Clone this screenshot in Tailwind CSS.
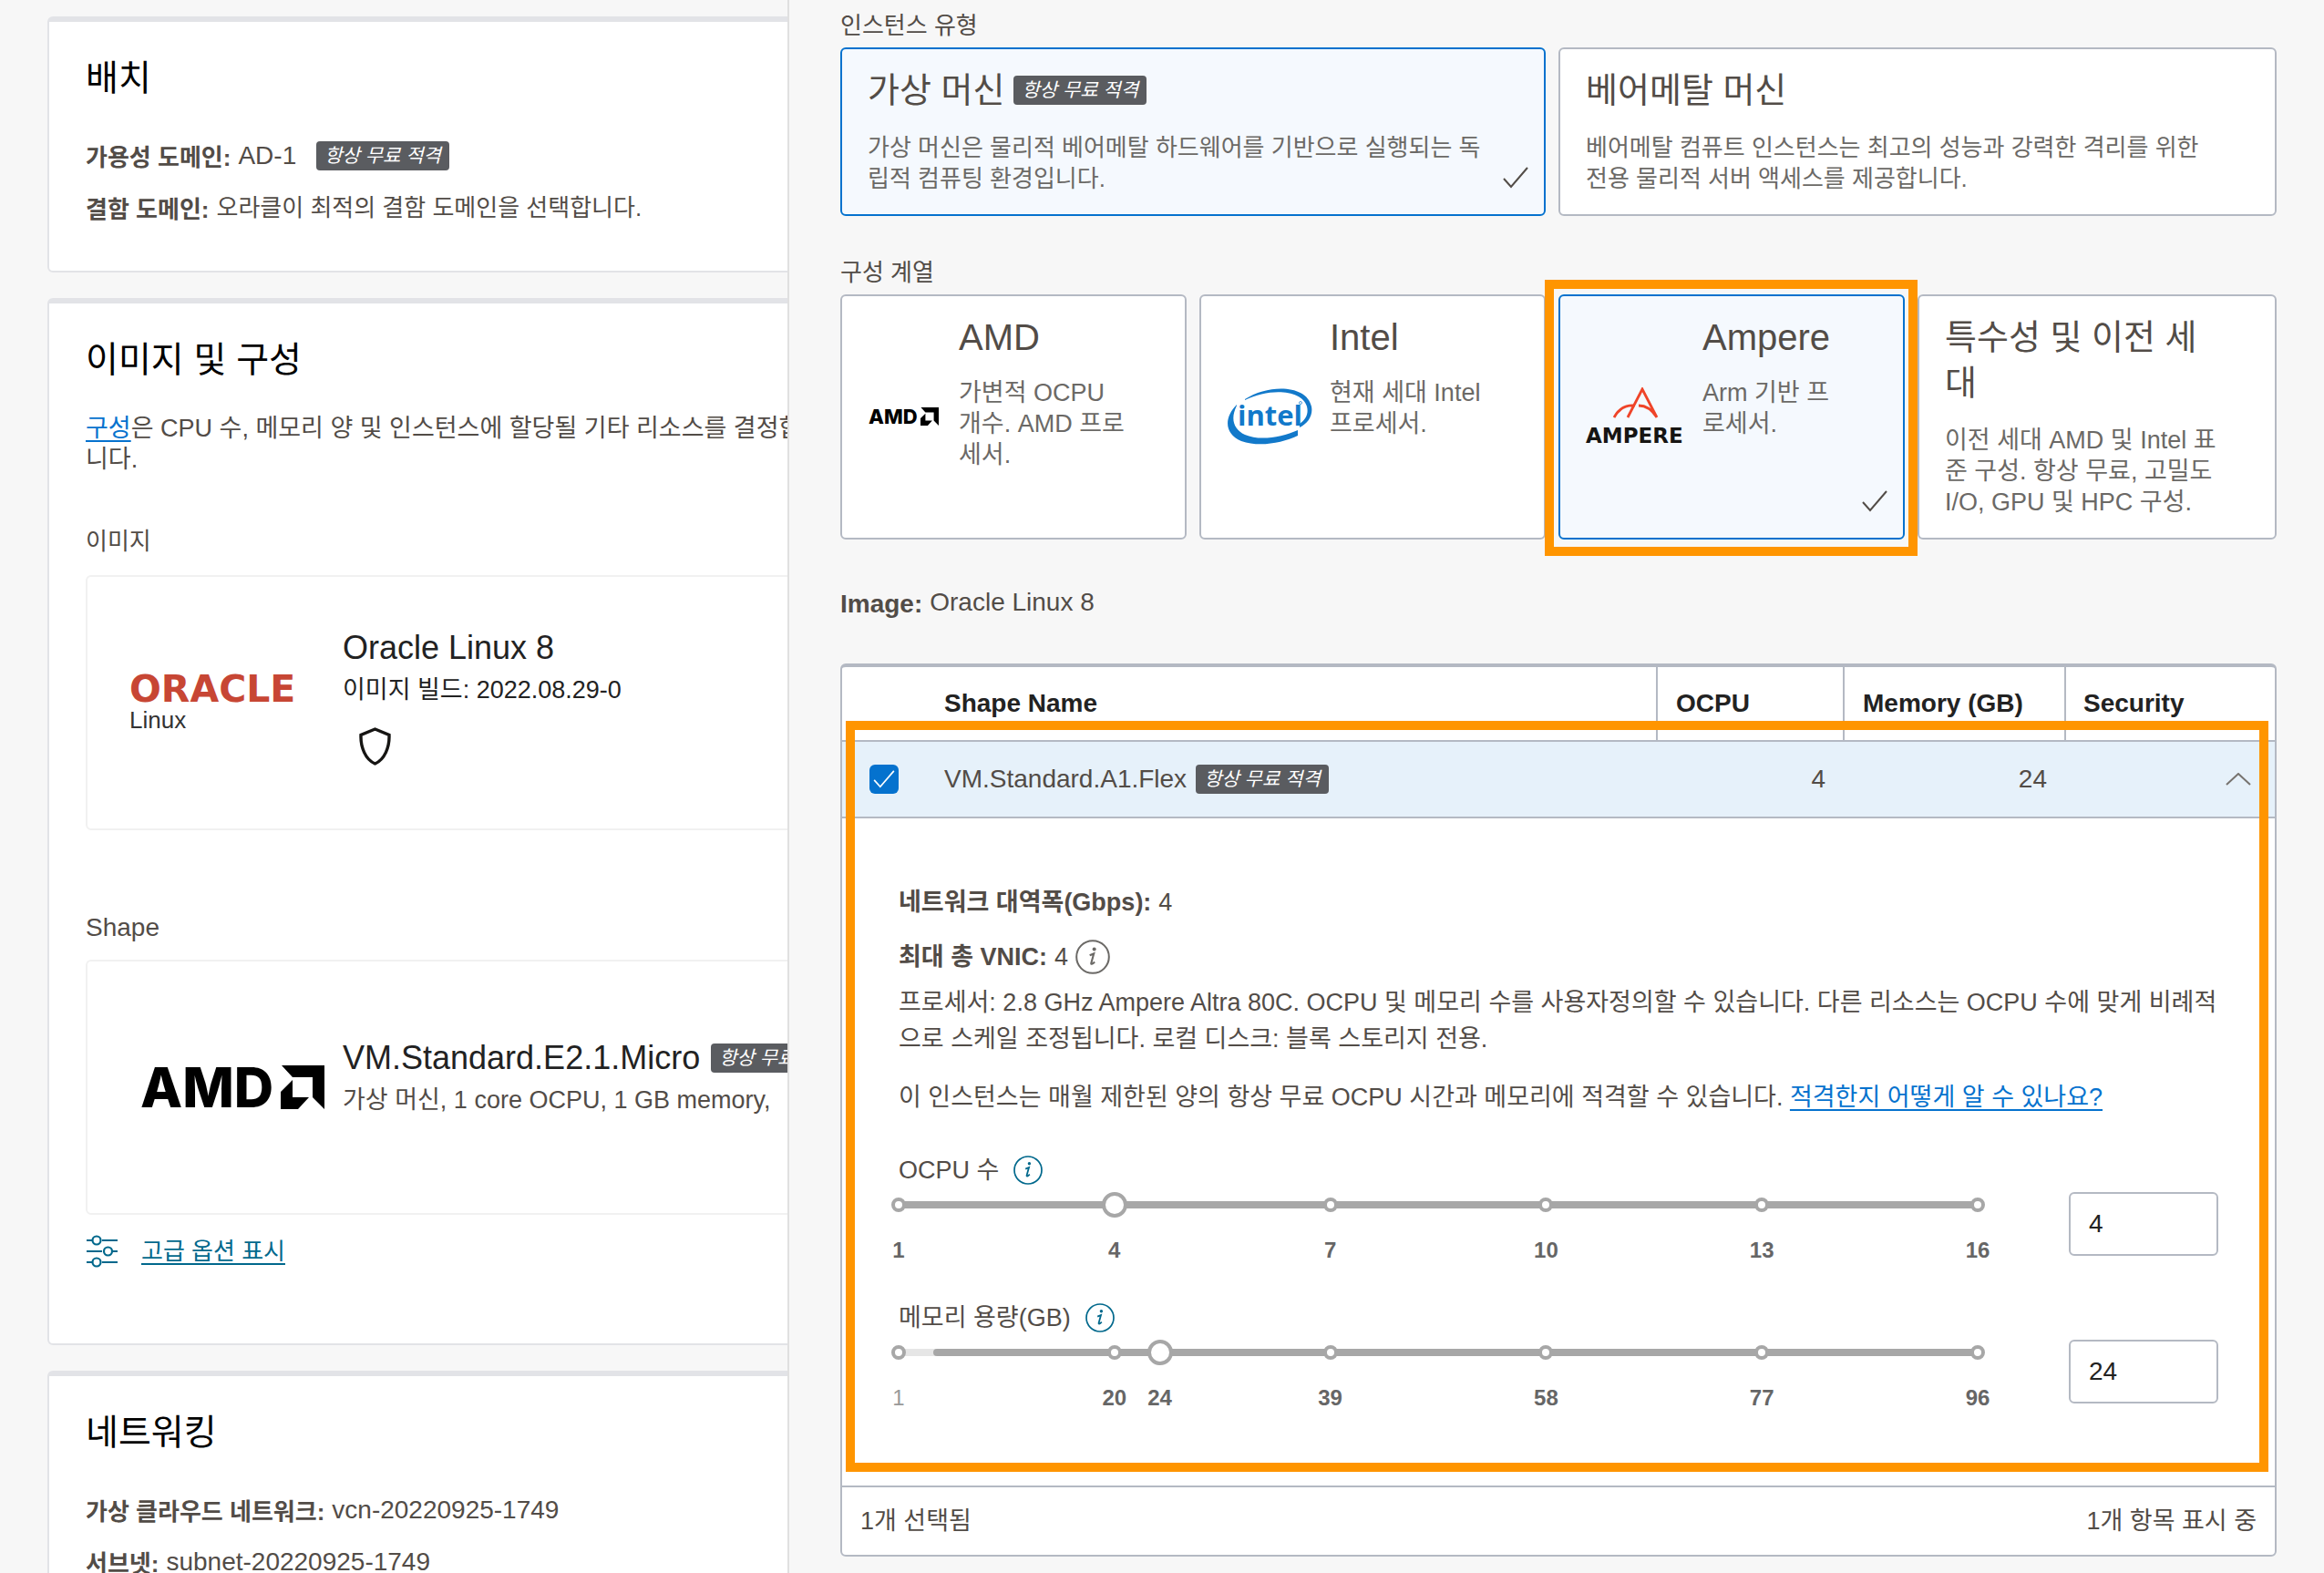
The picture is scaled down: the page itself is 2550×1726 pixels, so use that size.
<!DOCTYPE html>
<html lang="ko">
<head>
<meta charset="utf-8">
<meta name="viewport" content="width=device-width, initial-scale=1">
<title>컴퓨트 인스턴스 생성</title>
<script src="https://cdn.jsdelivr.net/npm/@tailwindcss/browser@4"></script>
</head>
<body class="bg-[#f7f7f7] font-['Liberation_Sans','Noto_Sans_CJK_KR',sans-serif] text-[26px] leading-[34px] text-[#524c47]">
<svg class="hidden" aria-hidden="true">
  <symbol id="amd-arrow" viewBox="0 0 48 48"><path d="M1 0H48V48L35 35V13H13Z"/><path d="M13 16V35H31L19 48H0V29Z"/></symbol>
  <symbol id="tick" viewBox="0 0 28 24"><path d="M1 13 9 22 27 1" fill="none" stroke="currentColor" stroke-width="2"/></symbol>
  <symbol id="info" viewBox="0 0 32 32"><circle cx="16" cy="16" r="15" fill="none" stroke="currentColor" stroke-width="1.7"/><circle cx="17.4" cy="8.8" r="1.7" fill="currentColor"/><path d="M13.2 14.6 17 13 14.6 21.6C14.3 23 15.4 23 17.8 20.6" fill="none" stroke="currentColor" stroke-width="1.8"/></symbol>
</svg>

<div class="flex h-screen overflow-hidden">
  <main class="w-[864px] shrink-0 overflow-hidden pl-[52px] pt-[18px]">
    <div class="flex w-[1200px] flex-col gap-[28px]">
      <section class="rounded-md border-2 border-t-[6px] border-[#e2e3e7] bg-white px-[40px] pb-[49px] pt-[32px]">
        <h2 class="text-[39px] leading-[60px] text-black">배치</h2>
        <dl class="mt-[38px] flex flex-col gap-[20px]">
          <div class="flex items-end gap-[8px]">
            <dt class="font-bold leading-[36px]">가용성 도메인:</dt>
            <dd class="flex items-center pb-[3px] text-[28px]">AD-1 <span class="ml-[22px] flex h-[32px] items-center rounded bg-[#5a5c60] px-[9px] text-[21px] italic text-white">항상 무료 적격</span></dd>
          </div>
          <div class="flex items-end gap-[8px]">
            <dt class="font-bold leading-[36px]">결함 도메인:</dt>
            <dd class="pb-[3px]">오라클이 최적의 결함 도메인을 선택합니다.</dd>
          </div>
        </dl>
      </section>

      <section class="rounded-md border-2 border-t-[6px] border-[#e2e3e7] bg-white px-[40px] pb-[81px] pt-[32px]">
        <h2 class="text-[39px] leading-[60px] text-black">이미지 및 구성</h2>
        <p class="mt-[28px] max-w-[786px] text-[27px]"><a href="#" class="text-[#0572ce] underline underline-offset-4">구성</a>은 CPU 수, 메모리 양 및 인스턴스에 할당될 기타 리소스를 결정합니다.</p>
        <h3 class="mt-[56px]">이미지</h3>
        <div class="mt-[20px] flex h-[280px] rounded-md border-2 border-[#f1f1f1]">
          <div class="w-[280px] shrink-0 self-center pl-[46px]">
            <div class="font-['DejaVu_Sans'] text-[41px] font-bold leading-[36px] text-[#c74634]">ORACLE</div>
            <div class="mt-[2px] leading-[28px] text-[#333]">Linux</div>
          </div>
          <div class="pt-[55px] text-[#222]">
            <div class="text-[36px] leading-[46px]">Oracle Linux 8</div>
            <div class="text-[27px] leading-[46px]">이미지 빌드: 2022.08.29-0</div>
            <svg class="ml-[18px] mt-[18px] h-[42px] w-[35px]" viewBox="0 0 35 42" fill="none" stroke="#161513" stroke-width="3.4"><path d="M17.500 2 33 8.500C33.500 22 28 35.500 17.500 40 7 35.500 1.500 22 2 8.500Z"/></svg>
          </div>
        </div>
        <h3 class="mt-[90px] text-[28px]">Shape</h3>
        <div class="mt-[18px] flex h-[280px] rounded-md border-2 border-[#f1f1f1]">
          <div class="flex w-[280px] shrink-0 items-center self-center pl-[58px] text-black">
            <span class="w-[154px] font-[Inter] text-[60px] font-extrabold leading-[48px]">AMD</span>
            <svg class="h-[48px] w-[48px]"><use href="#amd-arrow"/></svg>
          </div>
          <div class="pt-[83px]">
            <div class="flex items-center gap-[12px] text-[36px] leading-[46px] text-[#222]">VM.Standard.E2.1.Micro <span class="flex h-[32px] items-center rounded bg-[#5a5c60] px-[9px] text-[21px] italic text-white">항상 무료 적격</span></div>
            <div class="text-[27px] leading-[46px]">가상 머신, 1 core OCPU, 1 GB memory,</div>
          </div>
        </div>
        <div class="mt-[20px] flex h-[40px] items-center gap-[25px]">
          <svg class="h-[36px] w-[36px]" viewBox="0 0 36 36" fill="none" stroke="#00688c" stroke-width="2.200"><path d="M1 6H7M18 6H35M1 18H18M29 18H35M1 30H7M18 30H35"/><circle cx="12" cy="6" r="4.500"/><circle cx="24.500" cy="18" r="4.500"/><circle cx="12" cy="30" r="4.500"/></svg>
          <a href="#" class="text-[#00688c] underline underline-offset-4">고급 옵션 표시</a>
        </div>
      </section>

      <section class="rounded-md border-2 border-t-[6px] border-[#e2e3e7] bg-white px-[40px] pb-[49px] pt-[32px]">
        <h2 class="text-[39px] leading-[60px] text-black">네트워킹</h2>
        <dl class="mt-[38px] flex flex-col gap-[20px]">
          <div class="flex items-end gap-[8px]">
            <dt class="font-bold leading-[36px]">가상 클라우드 네트워크:</dt>
            <dd class="pb-[3px] text-[28px]">vcn-20220925-1749</dd>
          </div>
          <div class="flex items-end gap-[8px]">
            <dt class="font-bold leading-[36px]">서브넷:</dt>
            <dd class="pb-[3px] text-[28px]">subnet-20220925-1749</dd>
          </div>
        </dl>
      </section>
    </div>
  </main>

  <aside class="min-w-0 flex-1 border-l-2 border-[#e0e0e0] pl-[56px] pr-[52px] pt-[11px]">
    <h3>인스턴스 유형</h3>
    <div class="mt-[7px] grid grid-cols-2">
      <button type="button" class="relative mr-[14px] flex flex-col items-start rounded-md border-2 border-[#0572ce] bg-[#f5f9fe] pb-[22px] pl-[28px] pr-[60px] pt-[20px] text-left">
        <span class="flex items-center gap-[10px] text-[38px] leading-[50px]">가상 머신 <span class="flex h-[32px] items-center rounded bg-[#5a5c60] px-[9px] text-[21px] italic text-white">항상 무료 적격</span></span>
        <span class="mt-[21px] text-[#6b6966]">가상 머신은 물리적 베어메탈 하드웨어를 기반으로 실행되는 독립적 컴퓨팅 환경입니다.</span>
        <svg class="absolute bottom-[28px] right-[17px] h-[24px] w-[28px]"><use href="#tick"/></svg>
      </button>
      <button type="button" class="flex flex-col items-start rounded-md border-2 border-[#b4b9c3] bg-white pb-[22px] pl-[28px] pr-[60px] pt-[20px] text-left">
        <span class="text-[38px] leading-[50px]">베어메탈 머신</span>
        <span class="mt-[21px] text-[#6b6966]">베어메탈 컴퓨트 인스턴스는 최고의 성능과 강력한 격리를 위한 전용 물리적 서버 액세스를 제공합니다.</span>
      </button>
    </div>

    <h3 class="mt-[45px]">구성 계열</h3>
    <div class="mt-[7px] grid grid-cols-4">
      <button type="button" class="mr-[14px] flex items-start rounded-md border-2 border-[#b4b9c3] bg-white pb-[22px] pl-[29px] pr-[60px] pt-[20px] text-left">
        <span class="flex w-[99px] shrink-0 items-center self-center text-black">
          <span class="w-[57px] font-[Inter] text-[22px] font-extrabold">AMD</span>
          <svg class="h-[20px] w-[20px]"><use href="#amd-arrow"/></svg>
        </span>
        <span class="flex flex-col">
          <span class="text-[40px] leading-[50px]">AMD</span>
          <span class="mt-[19px] text-[27px] text-[#6b6966]">가변적 OCPU 개수. AMD 프로세서.</span>
        </span>
      </button>
      <button type="button" class="mr-[14px] flex items-start rounded-md border-2 border-[#b4b9c3] bg-white pb-[22px] pl-[28px] pr-[60px] pt-[20px] text-left">
        <span class="w-[113px] shrink-0 self-center">
          <svg class="h-[62px] w-[94px]" viewBox="0 0 94 62" fill="#1279ca">
            <path d="M20 12C46-5 88-4 93 20C95 30 89 39 80 43V39C87 34 90 28 88 20C83 2 48-1 20 13Z"/>
            <path d="M11 18C-3 32-3 50 16 58C36 65 61 60 78 52V46C60 54 36 58 20 51C7 45 4 33 11 19Z"/>
            <text x="12" y="41" font-family="Open Sans" font-size="31" font-weight="700">intel</text>
            <circle cx="81" cy="16" r="1.500" fill="none" stroke="#1279ca" stroke-width=".7"/>
          </svg>
        </span>
        <span class="flex flex-col">
          <span class="text-[40px] leading-[50px]">Intel</span>
          <span class="mt-[19px] text-[27px] text-[#6b6966]">현재 세대 Intel 프로세서.</span>
        </span>
      </button>
      <div class="relative mr-[14px] flex">
        <button type="button" class="relative flex flex-1 items-start rounded-md border-2 border-[#0572ce] bg-[#f5f9fe] pb-[22px] pl-[28px] pr-[60px] pt-[20px] text-left">
          <span class="flex w-[128px] shrink-0 flex-col self-center">
            <svg class="ml-[30px] h-[34px] w-[50px]" viewBox="0 0 50 34" fill="none" stroke="#ef4429" stroke-width="2.800"><path d="M16 33 32 2 48 33M1 33C6 24 14 19 24 20M28 20C36 20 43 25 48 33"/></svg>
            <span class="mt-[8px] font-['DejaVu_Sans'] text-[23px] font-bold leading-[22px] text-[#161513]">AMPERE</span>
          </span>
          <span class="flex flex-col">
            <span class="text-[40px] leading-[50px]">Ampere</span>
            <span class="mt-[19px] text-[27px] text-[#6b6966]">Arm 기반 프로세서.</span>
          </span>
          <svg class="absolute bottom-[28px] right-[17px] h-[24px] w-[28px]"><use href="#tick"/></svg>
        </button>
        <div class="pointer-events-none absolute -bottom-[18px] -left-[15px] -right-[14px] -top-[16px] z-10 border-[10px] border-[#ff9500]"></div>
      </div>
      <button type="button" class="flex flex-col items-start rounded-md border-2 border-[#b4b9c3] bg-white pb-[22px] pl-[28px] pr-[60px] pt-[20px] text-left">
        <span class="text-[38px] leading-[50px]">특수성 및 이전 세대</span>
        <span class="mt-[21px] text-[27px] text-[#6b6966]">이전 세대 AMD 및 Intel 표준 구성. 항상 무료, 고밀도 I/O, GPU 및 HPC 구성.</span>
      </button>
    </div>

    <p class="mt-[52px] flex items-end gap-[8px] text-[28px]"><b class="leading-[36px]">Image:</b><span class="pb-[3px]">Oracle Linux 8</span></p>

    <div class="relative mt-[47px] rounded-md border-2 border-t-4 border-[#b4b9c3] bg-white">
      <table class="w-full table-fixed border-collapse text-[28px]">
        <colgroup><col class="w-[112px]"><col><col class="w-[205px]"><col class="w-[243px]"><col class="w-[230px]"></colgroup>
        <thead>
          <tr class="h-[81px] border-b-2 border-[#b4b9c3] text-left text-[#222]">
            <td></td>
            <th scope="col" class="border-r-2 border-[#b4b9c3]">Shape Name</th>
            <th scope="col" class="border-r-2 border-[#b4b9c3] pl-[20px]">OCPU</th>
            <th scope="col" class="border-r-2 border-[#b4b9c3] pl-[20px]">Memory (GB)</th>
            <th scope="col" class="pl-[19px]">Security</th>
          </tr>
        </thead>
        <tbody>
          <tr class="h-[84px] border-b-2 border-[#b4b9c3] bg-[#e6f1fa]">
            <td>
              <span class="relative ml-[30px] block h-[32px] w-[32px] text-white">
                <input type="checkbox" checked aria-label="VM.Standard.A1.Flex 선택" class="block h-[32px] w-[32px] appearance-none rounded-md bg-[#0572ce]">
                <svg class="pointer-events-none absolute left-[4px] top-[6px] h-[20px] w-[24px]"><use href="#tick"/></svg>
              </span>
            </td>
            <td><div class="flex items-center gap-[10px]">VM.Standard.A1.Flex <span class="flex h-[32px] items-center rounded bg-[#5a5c60] px-[9px] text-[21px] italic text-white">항상 무료 적격</span></div></td>
            <td class="pr-[20px] text-right">4</td>
            <td class="pr-[20px] text-right">24</td>
            <td class="pr-[26px]">
              <button type="button" aria-label="접기" class="ml-auto block"><svg class="h-[14px] w-[28px]" viewBox="0 0 28 14" fill="none" stroke="#77736f" stroke-width="2"><path d="M1 13 14 1 27 13"/></svg></button>
            </td>
          </tr>
        </tbody>
      </table>

      <div class="px-[62px] pb-[76px] pt-[72px] leading-[40px]">
        <p class="flex gap-[8px] text-[27px]"><b>네트워크 대역폭(Gbps):</b><span>4</span></p>
        <p class="mt-[20px] flex items-center gap-[8px] text-[27px]"><b>최대 총 VNIC:</b><span>4</span>
          <button type="button" aria-label="VNIC 정보" class="text-[#6b6966]"><svg class="h-[38px] w-[38px]"><use href="#info"/></svg></button></p>
        <p class="-mr-[12px] mt-[10px] text-[27px]">프로세서: 2.8 GHz Ampere Altra 80C. OCPU 및 메모리 수를 사용자정의할 수 있습니다. 다른 리소스는 OCPU 수에 맞게 비례적으로 스케일 조정됩니다. 로컬 디스크: 블록 스토리지 전용.</p>
        <p class="mt-[24px] text-[27px]">이 인스턴스는 매월 제한된 양의 항상 무료 OCPU 시간과 메모리에 적격할 수 있습니다. <a href="#" class="text-[#0572ce] underline underline-offset-4">적격한지 어떻게 알 수 있나요?</a></p>

        <div class="mt-[40px] flex items-center gap-[16px]">
          <label for="ocpu" class="text-[27px]">OCPU 수</label>
          <button type="button" aria-label="OCPU 정보" class="text-[#00688c]"><svg class="h-[32px] w-[32px]"><use href="#info"/></svg></button>
        </div>
        <div class="mt-[4px] flex gap-[100px]">
          <div class="min-w-0 flex-1">
            <div class="relative flex h-[28px] items-center">
              <div class="h-[8px] w-full bg-[#a7a7a7]"></div>
              <div class="absolute -left-[8px] -right-[8px] flex justify-between">
                <i class="h-[16px] w-[16px] rounded-full border-4 border-[#a7a7a7] bg-white"></i><i class="h-[16px] w-[16px] rounded-full border-4 border-[#a7a7a7] bg-white"></i><i class="h-[16px] w-[16px] rounded-full border-4 border-[#a7a7a7] bg-white"></i><i class="h-[16px] w-[16px] rounded-full border-4 border-[#a7a7a7] bg-white"></i><i class="h-[16px] w-[16px] rounded-full border-4 border-[#a7a7a7] bg-white"></i><i class="h-[16px] w-[16px] rounded-full border-4 border-[#a7a7a7] bg-white"></i>
              </div>
              <input type="range" min="1" max="16" value="4" aria-label="OCPU 수 슬라이더" class="absolute -left-[14px] top-0 h-[28px] w-[calc(100%+28px)] appearance-none bg-transparent [&::-webkit-slider-thumb]:h-[28px] [&::-webkit-slider-thumb]:w-[28px] [&::-webkit-slider-thumb]:appearance-none [&::-webkit-slider-thumb]:rounded-full [&::-webkit-slider-thumb]:border-4 [&::-webkit-slider-thumb]:border-[#a7a7a7] [&::-webkit-slider-thumb]:bg-white">
            </div>
            <div class="relative mt-[16px] h-[40px] text-[24px] font-bold text-[#666]">
              <span class="absolute -translate-x-1/2" style="left:0%">1</span><span class="absolute -translate-x-1/2" style="left:20%">4</span><span class="absolute -translate-x-1/2" style="left:40%">7</span><span class="absolute -translate-x-1/2" style="left:60%">10</span><span class="absolute -translate-x-1/2" style="left:80%">13</span><span class="absolute -translate-x-1/2" style="left:100%">16</span>
            </div>
          </div>
          <input id="ocpu" type="text" value="4" class="h-[70px] w-[164px] rounded-md border-2 border-[#b4b9c3] bg-white pl-[20px] text-[28px] text-[#222]">
        </div>

        <div class="mt-[34px] flex items-center gap-[16px]">
          <label for="memory" class="text-[27px]">메모리 용량(GB)</label>
          <button type="button" aria-label="메모리 정보" class="text-[#00688c]"><svg class="h-[32px] w-[32px]"><use href="#info"/></svg></button>
        </div>
        <div class="mt-[4px] flex gap-[100px]">
          <div class="min-w-0 flex-1">
            <div class="relative flex h-[28px] items-center">
              <div class="h-[8px] w-full bg-[#e6e6e6]"><div class="ml-auto h-[8px] rounded-l bg-[#a7a7a7]" style="width:96.8%"></div></div>
              <div class="absolute -left-[8px] -right-[8px] flex justify-between">
                <i class="h-[16px] w-[16px] rounded-full border-4 border-[#a7a7a7] bg-white"></i><i class="h-[16px] w-[16px] rounded-full border-4 border-[#a7a7a7] bg-white"></i><i class="h-[16px] w-[16px] rounded-full border-4 border-[#a7a7a7] bg-white"></i><i class="h-[16px] w-[16px] rounded-full border-4 border-[#a7a7a7] bg-white"></i><i class="h-[16px] w-[16px] rounded-full border-4 border-[#a7a7a7] bg-white"></i><i class="h-[16px] w-[16px] rounded-full border-4 border-[#a7a7a7] bg-white"></i>
              </div>
              <input type="range" min="1" max="96" value="24" aria-label="메모리 용량 슬라이더" class="absolute -left-[14px] top-0 h-[28px] w-[calc(100%+28px)] appearance-none bg-transparent [&::-webkit-slider-thumb]:h-[28px] [&::-webkit-slider-thumb]:w-[28px] [&::-webkit-slider-thumb]:appearance-none [&::-webkit-slider-thumb]:rounded-full [&::-webkit-slider-thumb]:border-4 [&::-webkit-slider-thumb]:border-[#a7a7a7] [&::-webkit-slider-thumb]:bg-white">
            </div>
            <div class="relative mt-[16px] h-[40px] text-[24px] font-bold text-[#666]">
              <span class="absolute -translate-x-1/2 font-normal text-[#999]" style="left:0%">1</span><span class="absolute -translate-x-1/2" style="left:20%">20</span><span class="absolute -translate-x-1/2" style="left:24.2%">24</span><span class="absolute -translate-x-1/2" style="left:40%">39</span><span class="absolute -translate-x-1/2" style="left:60%">58</span><span class="absolute -translate-x-1/2" style="left:80%">77</span><span class="absolute -translate-x-1/2" style="left:100%">96</span>
            </div>
          </div>
          <input id="memory" type="text" value="24" class="h-[70px] w-[164px] rounded-md border-2 border-[#b4b9c3] bg-white pl-[20px] text-[28px] text-[#222]">
        </div>
      </div>

      <div class="flex h-[76px] items-center justify-between border-t-2 border-[#b4b9c3] px-[20px] text-[27px]">
        <span>1개 선택됨</span><span>1개 항목 표시 중</span>
      </div>
      <div class="pointer-events-none absolute bottom-[91px] left-[4px] right-[7px] top-[59px] z-10 border-[10px] border-[#ff9500]"></div>
    </div>
  </aside>
</div>
</body>
</html>
